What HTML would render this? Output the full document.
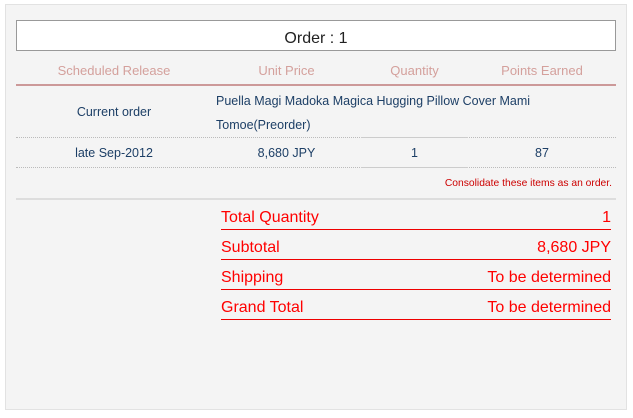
<!DOCTYPE html><html><head><style>
body{margin:0;width:633px;height:418px;background:#fff;font-family:"Liberation Sans",Arial,sans-serif;position:relative;overflow:hidden}
.p{position:absolute;left:5px;top:4px;width:620px;height:404px;background:#f4f4f4;border:1px solid #e2e2e2}
.a{position:absolute}
.c{text-align:center}
.h{color:#d4a09c;font-size:13px;top:63px}
.b{color:#1d3f66;font-size:12.5px}
.dot{position:absolute;left:16px;width:600px;border-top:1px dotted #bbb;height:0}
.t{position:absolute;left:221px;width:390px;height:29px;border-bottom:1px solid #e00;color:#f00;font-size:16px}
.t span{position:absolute;bottom:2px}
.t .r{right:0}
</style></head><body>
<div class="p"></div>
<div class="a c" style="left:16px;top:20px;width:598px;height:29px;background:#fff;border:1px solid #999;font-size:16px;line-height:36px;color:#222">Order : 1</div>
<div class="a c h" style="left:16px;width:196px">Scheduled Release</div>
<div class="a c h" style="left:212px;width:149px">Unit Price</div>
<div class="a c h" style="left:361px;width:107px">Quantity</div>
<div class="a c h" style="left:468px;width:148px">Points Earned</div>
<div class="a" style="left:16px;top:84px;width:600px;height:2px;background:#cc9999"></div>
<div class="a c b" style="left:16px;width:196px;top:105px">Current order</div>
<div class="a b" style="left:216px;top:89px;width:390px;line-height:24px">Puella Magi Madoka Magica Hugging Pillow Cover Mami Tomoe(Preorder)</div>
<div class="dot" style="top:137px"></div>
<div class="a" style="left:361px;top:137px;width:107px;height:1px;background:#ccc"></div>
<div class="a c b" style="left:16px;width:196px;top:146px">late Sep-2012</div>
<div class="a c b" style="left:212px;width:149px;top:146px">8,680 JPY</div>
<div class="a c b" style="left:361px;width:107px;top:146px">1</div>
<div class="a c b" style="left:468px;width:148px;top:146px">87</div>
<div class="dot" style="top:167px"></div>
<div class="a" style="left:361px;top:167px;width:107px;height:1px;background:#ccc"></div>
<div class="a" style="right:21px;top:178px;font-size:10.3px;color:#c00">Consolidate these items as an order.</div>
<div class="a" style="left:16px;top:198px;width:600px;height:2px;background:#ddd"></div>
<div class="t" style="top:200px"><span>Total Quantity</span><span class="r">1</span></div>
<div class="t" style="top:230px"><span>Subtotal</span><span class="r">8,680 JPY</span></div>
<div class="t" style="top:260px"><span>Shipping</span><span class="r">To be determined</span></div>
<div class="t" style="top:290px"><span>Grand Total</span><span class="r">To be determined</span></div>
</body></html>
